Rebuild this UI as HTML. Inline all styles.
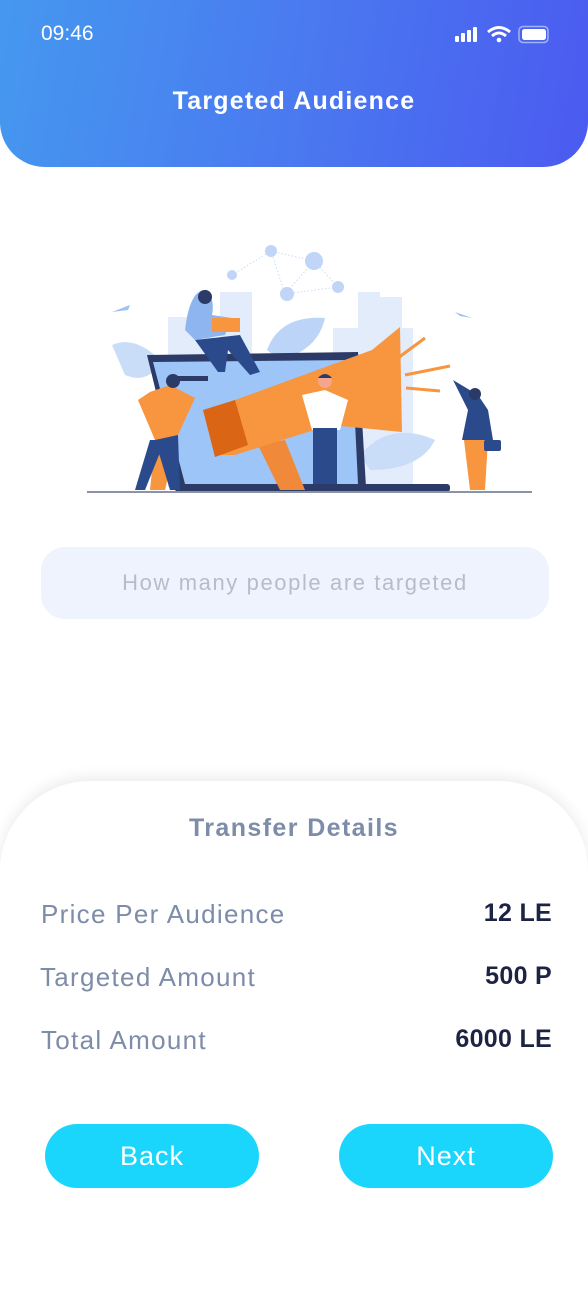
<!DOCTYPE html>
<html><head><meta charset="utf-8"><style>
*{margin:0;padding:0;box-sizing:border-box}
body{width:588px;height:1275px;background:#fff;font-family:"Liberation Sans",sans-serif;position:relative;overflow:hidden}
.hdr{position:absolute;left:0;top:0;width:588px;height:167px;background:linear-gradient(100deg,#4598ef 0%,#4a7af0 50%,#4b5af0 100%);border-radius:0 0 45px 45px;color:#fff}
.time{position:absolute;left:41px;top:22px;font-size:21px}
.title{position:absolute;left:0;right:0;top:87px;text-align:center;font-size:25px;font-weight:bold;letter-spacing:1.2px}
.inp{position:absolute;left:41px;top:547px;width:508px;height:72px;border-radius:24px;background:#eff3fe;color:#b6bccc;font-size:22px;text-align:center;line-height:72px;letter-spacing:1.6px}
.card{position:absolute;left:0;top:781px;width:588px;height:520px;background:#fff;border-radius:90px 90px 0 0;box-shadow:0 -4px 14px rgba(0,0,0,0.08)}
.ct{position:absolute;left:0;right:0;top:814px;text-align:center;color:#7d8ca8;font-size:25px;font-weight:bold;letter-spacing:1.4px}
.row{position:absolute;left:41px;right:36px;font-size:26px;color:#7d8ca8;letter-spacing:1.3px}
.row b{position:absolute;right:0;color:#1d2443;letter-spacing:0.3px;font-size:25px}
.btn{position:absolute;top:1124px;width:214px;height:64px;border-radius:32px;background:#1ad6fc;color:#fff;font-size:27px;text-align:center;line-height:64px;letter-spacing:1px}
</style></head><body>
<div class="hdr">
<div class="time">09:46</div>
<svg style="position:absolute;left:453px;top:25px" width="100" height="20">
<rect x="2" y="11" width="4" height="6" rx="1" fill="#fff"/><rect x="8" y="8" width="4" height="9" rx="1" fill="#fff"/><rect x="14" y="5" width="4" height="12" rx="1" fill="#fff"/><rect x="20" y="2" width="4" height="15" rx="1" fill="#fff"/>
<path d="M35 7 Q46 -2 57 7" stroke="#fff" stroke-width="3" fill="none"/><path d="M39 11 Q46 5 53 11" stroke="#fff" stroke-width="3" fill="none"/><circle cx="46" cy="15" r="2.3" fill="#fff"/>
<rect x="66" y="1.5" width="29" height="16" rx="4" stroke="#9fb4f5" stroke-width="1.5" fill="none"/><rect x="69" y="4" width="24" height="11" rx="2.5" fill="#fff"/>
</svg>
<div class="title">Targeted Audience</div>
</div>
<svg style="position:absolute;left:80px;top:230px" width="460" height="270" viewBox="80 230 460 270">
<g fill="#e3ecfb">
<rect x="168" y="317" width="45" height="170"/><rect x="220" y="292" width="32" height="195"/><rect x="358" y="292" width="22" height="195"/><rect x="380" y="297" width="22" height="190"/><rect x="333" y="328" width="80" height="160"/>
</g>
<path d="M112 345 Q135 335 160 360 Q150 385 125 375 Z" fill="#c9dcf8"/>
<path d="M267 350 Q280 315 325 318 Q318 350 280 360 Z" fill="#bcd4f7"/>
<path d="M360 455 Q390 420 435 440 Q420 470 370 470 Z" fill="#c9dcf8"/>
<g stroke="#c9dcf8" stroke-dasharray="1.5 2" fill="none"><path d="M232 275 L271 251 L285 294 L314 261 L338 287 L285 294 M271 251 L314 261"/></g>
<g fill="#c0d5f7"><circle cx="271" cy="251" r="6"/><circle cx="314" cy="261" r="9"/><circle cx="232" cy="275" r="5"/><circle cx="287" cy="294" r="7"/><circle cx="338" cy="287" r="6"/></g>
<path d="M112 312 L130 305 L128 310 Z M455 312 L472 318 L460 316 Z" fill="#9fc0f3"/>
<path d="M147 355 L358 352 L366 487 L180 490 Z" fill="#2b3a67"/>
<path d="M153 362 L352 360 L358 484 L185 484 Z" fill="#9ec5f8"/>
<rect x="175" y="484" width="275" height="8" rx="3" fill="#2b3a67"/>
<line x1="87" y1="492" x2="532" y2="492" stroke="#8c93a6" stroke-width="2"/>
<path d="M258 445 L280 490 L305 490 L285 440 Z" fill="#f08a3a"/>
<path d="M205 410 L235 400 L372 350 L400 327 L402 432 L330 425 L235 455 L215 455 Z" fill="#f8953f"/>
<path d="M203 410 L235 400 L248 445 L215 457 Z" fill="#d96515"/>
<path d="M398 358 L425 338 M405 375 L450 366 M406 388 L440 391" stroke="#f8953f" stroke-width="3"/>
<path d="M185 330 Q190 288 207 290 Q215 300 212 315 L232 318 L225 335 L195 340 Z" fill="#8fb5f0"/>
<path d="M195 340 L240 335 L260 372 L250 375 L228 350 L225 372 L218 372 Z" fill="#2b4a8c"/>
<rect x="212" y="318" width="28" height="14" fill="#f8953f"/>
<circle cx="205" cy="297" r="7" fill="#2b3a67"/>
<path d="M150 392 L170 385 L195 398 L178 435 L165 490 L150 490 L155 440 L138 400 Z" fill="#f8953f"/>
<path d="M155 440 L178 435 L180 490 L170 490 Z M150 440 L165 440 L145 490 L135 490 Z" fill="#2b4a8c"/>
<circle cx="173" cy="381" r="7" fill="#2b3a67"/><rect x="175" y="376" width="33" height="5" fill="#2b3a67"/>
<path d="M302 395 L325 390 L348 400 L340 430 L312 430 Z" fill="#fff"/>
<rect x="313" y="428" width="24" height="56" fill="#2b4a8c"/>
<circle cx="325" cy="381" r="7" fill="#f4a58b"/><path d="M318 378 Q325 370 332 378 Z" fill="#2b3a67"/>
<path d="M453 380 L468 410 L462 440 L493 440 L488 410 L478 395 Z" fill="#2b4a8c"/>
<path d="M464 440 L488 440 L485 490 L470 490 Z" fill="#f8953f"/>
<rect x="484" y="440" width="17" height="11" rx="2" fill="#2b4a8c"/>
<circle cx="475" cy="394" r="6" fill="#2b3a67"/>
</svg>
<div class="inp">How many people are targeted</div>
<div class="card"></div>
<div class="ct">Transfer Details</div>
<div class="row" style="top:899px">Price Per Audience<b>12 LE</b></div>
<div class="row" style="top:962px;left:40px">Targeted Amount<b>500 P</b></div>
<div class="row" style="top:1025px">Total Amount<b>6000 LE</b></div>
<div class="btn" style="left:45px">Back</div>
<div class="btn" style="left:339px">Next</div>
</body></html>
